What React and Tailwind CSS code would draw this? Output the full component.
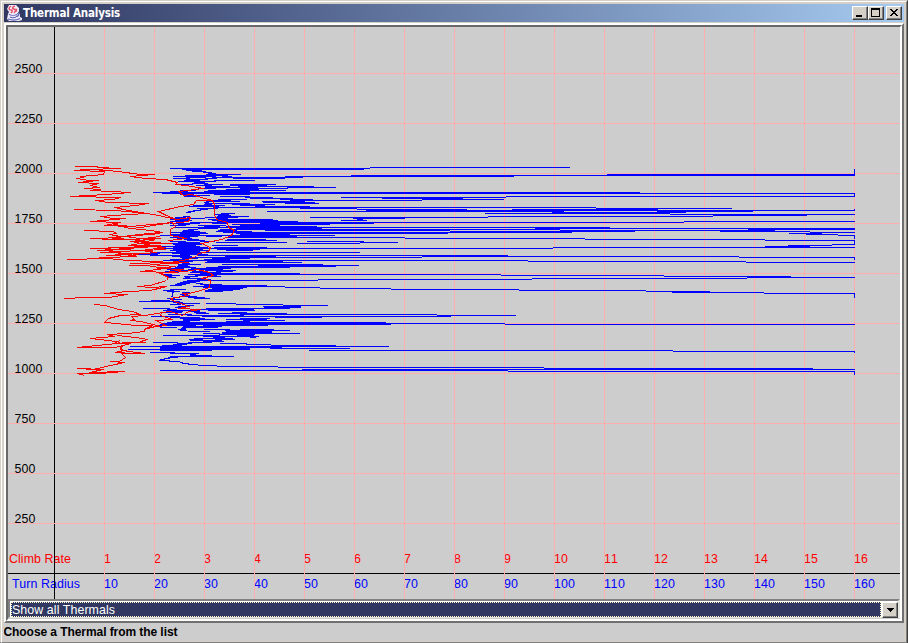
/* ─── Chart Data ─── */
// turn radius sweeps, one row per altitude: [y, x1, x2, x1, x2, ...]
const turnRows = [
  [167, 370, 570], [168, 170, 370], [169, 182, 364], [170, 186, 202], [171, 192, 206], [172, 203, 212],
  [173, 208, 216], [174, 206, 241, 607, 855], [175, 185, 228, 351, 855], [176, 173, 216, 222, 232, 285, 514],
  [177, 186, 206, 212, 303], [178, 173, 190, 205, 217, 233, 285], [179, 186, 208], [180, 184, 200, 214, 255], [181, 178, 216], [182, 194, 205],
  [183, 192, 208], [184, 177, 193, 204, 223, 230, 276], [185, 196, 212, 230, 267], [186, 205, 230, 238, 314], [187, 205, 258, 287, 336],
  [188, 198, 216, 240, 288], [189, 226, 259], [190, 180, 196, 208, 286], [191, 170, 188, 204, 250], [192, 153, 640], [193, 162, 855],
  [194, 180, 194, 214, 250], [195, 185, 210], [196, 184, 200, 220, 250, 506, 855], [197, 245, 273, 341, 506], [198, 250, 293, 382, 463],
  [199, 218, 247, 280, 313, 422, 504], [200, 207, 231, 290, 422], [201, 206, 240, 262, 305], [202, 204, 209, 263, 315],
  [203, 205, 250, 285, 319], [204, 204, 212, 232, 275], [205, 193, 225, 240, 265], [206, 189, 219, 255, 310], [207, 213, 596],
  [208, 197, 218, 300, 357, 596, 732], [209, 200, 208, 357, 467, 512, 658], [210, 193, 201, 366, 855],
  [211, 188, 195, 267, 564, 657, 753], [212, 186, 191, 552, 686], [213, 221, 235, 485, 670], [214, 215, 229, 670, 855],
  [215, 218, 231, 713, 807], [216, 183, 190, 217, 249, 488, 713], [217, 175, 186, 205, 238, 310, 488],
  [218, 175, 205, 217, 228, 353, 405], [219, 170, 190, 208, 273, 357, 363], [220, 175, 192, 212, 278, 341, 367],
  [221, 170, 184, 217, 298, 684, 855], [222, 190, 684], [223, 170, 200, 212, 227, 260, 374], [224, 178, 190, 232, 330],
  [225, 170, 186, 198, 226, 240, 280], [226, 204, 220, 226, 317], [227, 173, 610], [228, 198, 218, 236, 322, 535, 855],
  [229, 188, 198, 220, 560, 748, 855], [230, 183, 194, 218, 237, 265, 450, 560, 775], [231, 182, 200, 216, 252, 450, 635, 720, 810],
  [232, 170, 206, 223, 572, 810, 855], [233, 180, 208, 236, 448, 789, 822], [234, 170, 200, 240, 290, 806, 838],
  [235, 160, 335, 838, 855], [236, 178, 198, 206, 222, 230, 297], [237, 170, 190, 225, 405], [238, 177, 192, 405, 585],
  [239, 184, 199, 227, 266, 585, 765], [240, 187, 205, 225, 277, 765, 855], [241, 170, 186, 200, 215, 307, 364],
  [242, 178, 200, 216, 287, 360, 398], [243, 170, 200, 297, 360], [244, 173, 202, 832, 855], [245, 175, 196, 212, 238, 788, 832],
  [246, 148, 200, 765, 810], [247, 173, 208, 214, 267, 553, 855], [248, 163, 553], [249, 173, 203, 217, 260],
  [250, 170, 208, 226, 253], [251, 176, 200], [252, 150, 360], [253, 148, 160, 172, 202], [254, 139, 158, 180, 208], [255, 150, 190, 197, 508],
  [256, 172, 192, 225, 276, 422, 739], [257, 180, 422, 739, 855], [258, 182, 198, 212, 250], [259, 170, 188, 204, 230],
  [260, 163, 528], [261, 173, 193, 207, 283, 528, 746], [262, 170, 188, 205, 302, 746, 855], [263, 182, 190],
  [264, 178, 201, 222, 323], [265, 178, 188, 258, 359], [266, 177, 190, 218, 336], [267, 175, 196, 206, 290], [268, 170, 184, 191, 231],
  [269, 167, 178, 188, 223], [270, 170, 196, 205, 236], [271, 165, 178, 192, 205, 216, 233], [272, 170, 179, 190, 221], [273, 200, 300],
  [274, 163, 172, 188, 300, 501], [275, 163, 180, 195, 217, 501, 664], [276, 165, 172, 184, 198, 208, 221, 664, 791],
  [277, 167, 176, 185, 190, 747, 855], [278, 183, 206, 532, 747], [279, 197, 211, 318, 532], [280, 187, 318], [281, 183, 200],
  [282, 180, 196], [283, 177, 190, 196, 203], [284, 175, 186, 200, 222], [285, 170, 182, 204, 267], [286, 193, 267, 267, 285],
  [287, 203, 247, 285, 320], [288, 212, 243, 320, 391], [289, 170, 186, 208, 240, 391, 519], [290, 163, 174, 205, 233, 519, 646],
  [291, 167, 180, 205, 223, 646, 710], [292, 172, 174, 182, 190, 672, 764], [293, 172, 173, 184, 189, 764, 855],
  [294, 172, 173, 180, 188], [295, 172, 173, 182, 190], [296, 171, 173, 183, 197], [297, 173, 180, 188, 205],
  [298, 167, 175, 194, 210], [299, 170, 182], [300, 151, 170], [301, 139, 180], [302, 173, 183], [303, 177, 200, 206, 236],
  [304, 170, 181, 236, 283], [305, 187, 194, 283, 328], [306, 178, 189, 263, 301], [307, 175, 186, 264, 301],
  [308, 143, 170, 206, 290], [309, 167, 177, 193, 254], [310, 163, 200, 208, 255], [311, 172, 183, 191, 200],
  [312, 165, 182, 194, 206, 232, 247], [313, 196, 209, 218, 287], [314, 168, 192, 240, 437], [315, 187, 244, 437, 516],
  [316, 151, 180, 202, 451], [317, 170, 200, 275, 322], [318, 180, 205, 240, 270], [319, 183, 215, 226, 267],
  [320, 183, 200, 243, 285], [321, 172, 190, 226, 250], [322, 167, 386], [323, 163, 505], [324, 160, 391, 505, 855],
  [325, 155, 196, 203, 268], [326, 183, 222], [327, 160, 177, 182, 218], [328, 181, 186], [329, 178, 186, 204, 230, 240, 274],
  [330, 180, 187, 225, 290], [331, 188, 210, 226, 272], [332, 222, 272], [333, 203, 220, 222, 300], [334, 219, 255],
  [335, 163, 220, 237, 254], [336, 203, 259], [337, 213, 225, 250, 256], [338, 194, 233], [339, 189, 203, 215, 235],
  [340, 190, 222], [341, 203, 224], [342, 153, 178, 188, 212], [343, 177, 192, 220, 247], [344, 173, 187, 246, 271],
  [345, 162, 182, 271, 336], [346, 130, 389], [347, 160, 282], [348, 160, 250, 270, 350], [349, 128, 250],
  [350, 160, 212, 309, 673], [351, 673, 855], [352, 150, 175], [353, 170, 199], [354, 190, 196], [355, 190, 212],
  [356, 170, 234], [357, 168, 178], [358, 164, 170], [359, 160, 165], [360, 159, 170], [361, 169, 180], [362, 180, 183],
  [363, 182, 189], [364, 188, 198], [365, 198, 217], [366, 217, 278], [367, 278, 544], [368, 544, 813],
  [369, 302, 855], [370, 160, 508], [371, 508, 855],
];

// readings that stay clipped at the right limit: [y1, y2]
const clipped = [[169, 176], [193, 197], [209, 211], [235, 239], [240, 245], [257, 260], [293, 298], [351, 353], [371, 375]];

const climbTraces = [
  "74,166 97,166 97,167 120,168 85,169 74,170 104,171 97,169 118,171 140,174 154,174 130,176 145,178 165,179 177,182 175,184 186,185 203,188 178,191 183,195 191,194 201,197 212,200 196,200 193,204 180,206 158,211 166,215 176,219 190,217 188,221 172,223 175,226 170,229 170,235 186,238 168,240",
  "104,171 103,174 80,176 83,177 76,178 89,180 98,180 78,182 98,183 90,185 99,187 84,188 100,189 90,190 130,192 106,194 70,196 120,197 113,199 95,200 108,202 148,203 135,205 114,207 128,210 158,215 176,219",
  "74,209 115,210 147,213 128,214 100,216 113,218 125,218 103,220 90,221 120,222 104,225 130,226 172,222 140,227 113,224 130,228 151,230 162,232 148,233 130,235 112,238 135,239 160,236",
  "84,230 113,231 116,233 109,234 120,236 104,238 90,238 112,239 160,238 130,241 171,243 140,243 128,245 160,245 125,247 90,248 130,249 97,250 155,246 165,249 118,251 100,252 140,253 106,255 135,256 104,257 81,259 67,259 107,258 127,260 155,261 170,262 130,263",
  "212,200 214,204 214,214 216,219 227,222 228,227 234,230 231,235 221,239 201,243 210,247 208,251 198,253 196,256 187,259 170,262 188,262 150,264 175,266 157,268 183,269 160,273 168,277 166,280 150,285",
  "160,233 125,236 153,240 134,242 165,247 140,250 156,252 133,254 136,256 120,253 112,251",
  "128,265 146,265 165,268 140,271 170,272 185,271 197,269 209,272 213,275 201,278 210,280 209,287 200,290 189,293 182,293 187,295 170,298 174,301 183,304 188,306 178,308 200,309 188,311 182,315 170,311 161,312 160,315 172,319 156,320 165,325 150,327",
  "150,285 137,286 152,287 166,286 150,290 128,291 104,293 127,294 108,297 85,297 64,298",
  "94,304 105,305 118,309 132,311 140,314 120,315 108,318 104,322 116,323 135,325 152,325 144,329 144,331 127,333 107,334 114,336 90,338 108,340 120,342",
  "162,312 145,315 131,316 134,319 130,320 140,321 157,325 148,328",
  "117,335 135,337 147,339 140,341 145,342 127,342 106,344 77,347 115,347 122,345 120,349 128,351 144,353 121,353 125,357 119,361 110,361 124,362 110,365 93,369 77,368 103,369 89,372 124,371 100,373 77,373 84,375",
  "120,340 113,343 130,343 119,346 123,350 115,352 134,353",
];

const turnPath = turnRows
  .map(([y, ...xs]) => {
    // an odd number of ends means the last run continues the one before it
    const ends = xs.length % 2 === 0 ? xs : [...xs.slice(0, -1), xs[xs.length - 2], xs[xs.length - 1]];
    return ends.map((x, i) => (i % 2 === 0 ? `M${x} ${y + 0.5}` : `H${x}`)).join("");
  })
  .join("");
const clippedPath = clipped.map(([a, b]) => `M854.5 ${a}V${b}`).join("");

const altitudes = [2500, 2250, 2000, 1750, 1500, 1250, 1000, 750, 500, 250];
const columns = Array.from({ length: 16 }, (_, i) => i + 1);

/* ─── Chart ─── */
const Chart = () => (
  <svg width="892" height="572" viewBox="8 27 892 572" className="block shrink-0 font-['Liberation_Sans',sans-serif] text-[12px]">
    <rect x="8" y="27" width="892" height="572" fill="#cdcdcd" />
    <g fontSize="12.4">
      {altitudes.map((a, i) => (
        <text key={a} x="14.5" y={73 + i * 50} textLength={a > 999 ? 28 : 21}>{a}</text>
      ))}
      <text x="9" y="563" fill="#f00" textLength="62">Climb Rate</text>
      <text x="12" y="588" fill="#00f" textLength="68">Turn Radius</text>
      {columns.map((n) => (
        <g key={n}>
          <text x={n * 50 + 54} y="563" fill="#f00" textLength={n > 9 ? 14 : 7}>{n}</text>
          <text x={n * 50 + 54} y="588" fill="#00f" textLength={n > 9 ? 21 : 14}>{n * 10}</text>
        </g>
      ))}
    </g>
    <g shapeRendering="crispEdges" fill="none" strokeWidth="1">
      <path d="M54.5 27V599M8 573.5H900" stroke="#000" />
      {altitudes.map((a, i) => (
        <path key={a} d={`M8 ${73.5 + i * 50}H900`} stroke="#ffaeae" />
      ))}
      {columns.map((n) => (
        <path key={n} d={`M${n * 50 + 54.5} 27V599`} stroke="#ffaeae" />
      ))}
      <path d={turnPath + clippedPath} stroke="#00f" />
      <g stroke="#f00" transform="translate(.5 .5)">
        {climbTraces.map((points) => (
          <polyline key={points} points={points} />
        ))}
      </g>
    </g>
  </svg>
);

/* ─── Title Bar ─── */
const JavaIcon = () => (
  <svg width="16" height="16" viewBox="0 0 16 16" fill="none" className="shrink-0">
    <path d="M3 0h7l3 3v3l-1 2 2 1v3l2 1v2l-3 1H3l-2-2 1-5 1-2-2-3z" fill="#f0ecf8" />
    <path d="M5 1C2 3 3 5 5 5s1 2 0 3M9 1C6 2 6 4 8 4s2 2 0 4M11 4c-1 1-1 2-1 3" stroke="#e8506a" strokeWidth="1.5" />
    <path d="M3 9.5c2 1 6 1 8 0M11 8.5c3 0 2 3-1 3M4 12c2 1 4 1 6 0M2 14c4 1.5 9 1 12-.5" stroke="#5a60b8" strokeWidth="1.2" />
  </svg>
);

const WindowButton = ({ children }) => (
  <button className="flex h-[14px] w-4 items-center justify-center border border-t-white border-l-white border-r-[#404040] border-b-[#404040] bg-[#d4d0c8] shadow-[inset_-1px_-1px_0_#808080]">
    <svg width="14" height="12" viewBox="0 0 14 12" shapeRendering="crispEdges" className="shrink-0">{children}</svg>
  </button>
);

const TitleBar = () => (
  <div className="flex h-[18px] items-center bg-linear-to-r from-[#303862] to-[#a6caf0] pr-0.5 pl-0.5">
    <JavaIcon />
    <span className="ml-px flex-1 font-['DejaVu_Sans_Condensed','DejaVu_Sans',sans-serif] text-[11.5px] leading-[18px] font-bold tracking-[-0.18px] whitespace-nowrap text-white [font-stretch:condensed]">
      Thermal Analysis
    </span>
    <WindowButton><path d="M3 8h6v2H3z" /></WindowButton>
    <WindowButton><path fillRule="evenodd" d="M2 1h9v9H2zM3 3v6h7V3z" /></WindowButton>
    <div className="w-0.5" />
    <WindowButton>
      <path d="M3 2h2v1h1v1h2V3h1V2h2v1h-1v1H9v1H8v1h1v1h1v1h1v1H9V8H8V7H6v1H5v1H3V8h1V7h1V6h1V5H5V4H4V3H3z" />
    </WindowButton>
  </div>
);

/* ─── Thermal Picker ─── */
const ThermalSelect = () => (
  <div className="flex h-[19px] shrink-0 border-t-2 border-l-2 border-r-2 border-b border-t-[#808080] border-l-[#808080] border-r-[#e8e8e0] border-b-[#e8e8e0] bg-white pt-px pl-px">
    <div className="flex h-[15px] flex-1 items-center border border-dotted border-[#ffffd0] bg-[#303862] bg-clip-border">
      <svg width="110" height="15" className="-my-px shrink-0 font-['Liberation_Sans',sans-serif] text-[12px]">
        <text x="0" y="12" fill="#fff" fontSize="12.4" textLength="103">Show all Thermals</text>
      </svg>
    </div>
    <button className="ml-px flex h-4 w-4 items-center justify-center border border-t-white border-l-white border-r-[#404040] border-b-[#404040] bg-[#d4d0c8] shadow-[inset_-1px_-1px_0_#808080]">
      <svg width="7" height="4" shapeRendering="crispEdges"><path d="M0 0h7v1H6v1H5v1H4v1H3V3H2V2H1V1H0z" /></svg>
    </button>
  </div>
);

const App = () => (
  <div className="flex h-[643px] w-[908px] flex-col border-t border-r border-b border-l border-t-[#d4d0c8] border-r-[#404040] border-b-[#404040] border-l-[#d4d0c8] bg-[#d4d0c8]">
    <div className="flex flex-1 flex-col border border-t-white border-r-[#808080] border-b-[#808080] border-l-white p-0.5 pb-px">
      <TitleBar />
      <div className="h-px" />
      <div className="flex flex-1 flex-col bg-[#cdcdcd]">
        {/* sunken outer edge */}
        <div className="border-2 border-t-white border-r-[#707070] border-b-[#707070] border-l-white">
          <div className="flex flex-col border-2 border-t-[#686868] border-r-white border-b-white border-l-[#686868] bg-[#cdcdcd]">
            <Chart />
            <ThermalSelect />
            <div className="h-px" />
          </div>
        </div>
        <div className="flex flex-1 items-center">
          <svg width="200" height="18" className="font-['Liberation_Sans',sans-serif] font-bold">
            <text x="-0.5" y="13" fontSize="12" textLength="174">Choose a Thermal from the list</text>
          </svg>
        </div>
      </div>
    </div>
  </div>
);

export default App;
